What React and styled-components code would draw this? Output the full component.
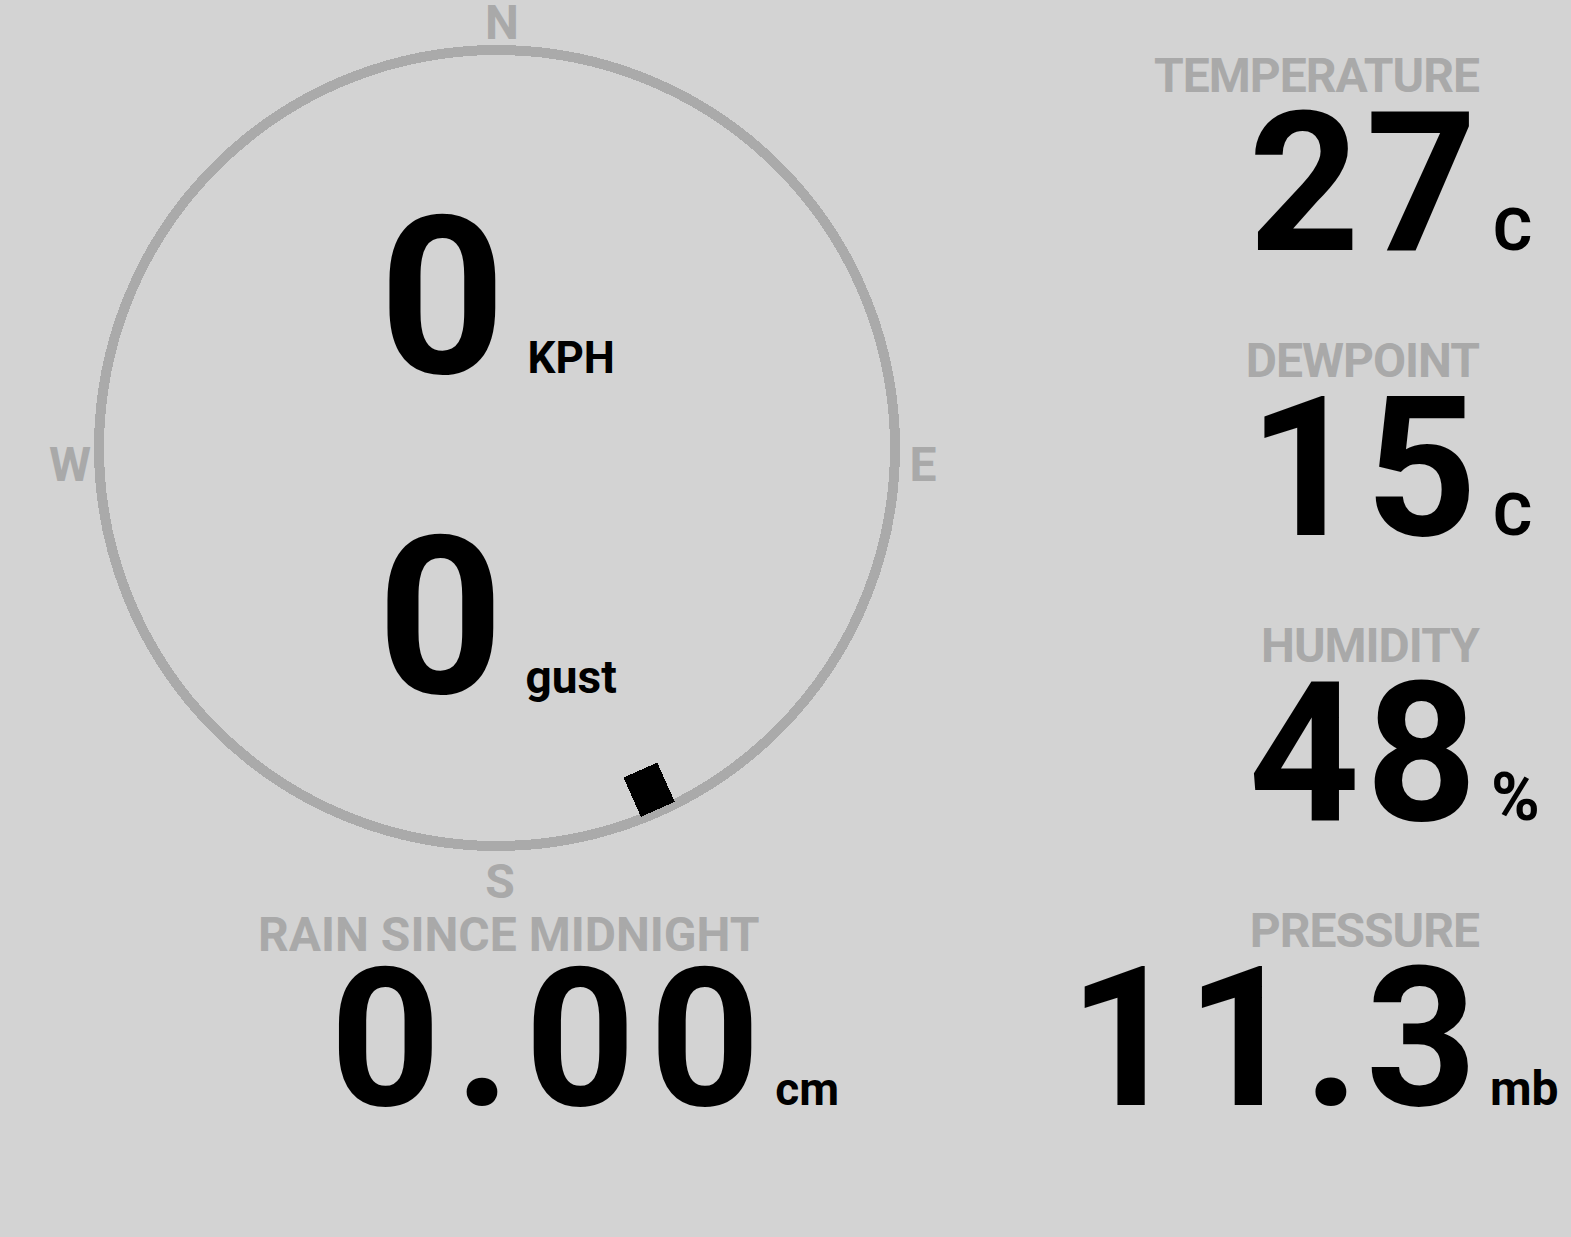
import React from "react";
import styled, { createGlobalStyle } from "styled-components";

const GlobalStyle = createGlobalStyle`
  html, body {
    margin: 0;
    padding: 0;
    background: #d3d3d3;
  }
  body {
    font-family: Roboto, "Liberation Sans", sans-serif;
  }
`;

const Page = styled.main`
  display: flex;
  width: 100%;
  height: 1237px;
  background: #d3d3d3;
  overflow: hidden;
`;

const LeftColumn = styled.section`
  display: flex;
  flex-direction: column;
  width: 994px;
`;

const Dial = styled.div`
  display: grid;
  width: 994px;
  height: 905px;

  > * {
    grid-area: 1 / 1;
  }

  svg {
    overflow: visible;
  }
`;

const Readouts = styled.div`
  display: flex;
  flex-direction: column;
  align-items: center;
  gap: 140px;
  padding-top: 208px;
`;

const Readout = styled.div`
  display: flex;
  align-items: baseline;
`;

const BigNumber = styled.span`
  font-weight: 700;
  font-size: ${(p) => p.size || 194}px;
  line-height: ${(p) => p.lh || 155}px;
  letter-spacing: ${(p) => p.spacing || 0}px;
  color: #000;
`;

const Unit = styled.span`
  font-weight: 700;
  font-size: ${(p) => p.size || 44}px;
  line-height: 1;
  color: #000;
  margin-left: ${(p) => p.gap || 14}px;
`;

const Label = styled.div`
  font-weight: 700;
  font-size: 48px;
  line-height: 48px;
  color: #a9a9a9;
  white-space: nowrap;
`;

const Rain = styled.div`
  display: flex;
  flex-direction: column;
  align-items: flex-start;
  padding-left: 258px;
  gap: 3px;
  margin-top: 6px;
`;

const RainRow = styled.div`
  display: flex;
  align-items: baseline;
  margin-left: 72px;
`;

const RightColumn = styled.section`
  flex: 1;
  display: flex;
  flex-direction: column;
  align-items: flex-end;
  padding-top: 52px;
  gap: 76px;
`;

const Reading = styled.div`
  display: flex;
  flex-direction: column;
  align-items: flex-end;
  gap: 6px;
`;

const ReadingLabel = styled(Label)`
  letter-spacing: -1px;
  margin-right: 92px;
`;

const ValueRow = styled.div`
  display: flex;
  align-items: baseline;
`;

const UnitCell = styled.span`
  width: 88px;
  box-sizing: border-box;
  padding-left: ${(p) => p.pad ?? 10}px;
  font-weight: 700;
  font-size: ${(p) => p.size || 60}px;
  line-height: 1;
  color: #000;
`;

const CompassLetter = styled.text`
  font-family: Roboto, "Liberation Sans", sans-serif;
  font-weight: 700;
  font-size: 48px;
  fill: #a9a9a9;
`;

function Compass({ direction }) {
  const cx = 497;
  const cy = 448;
  const r = 398;
  const markerR = 374;
  const rad = (direction * Math.PI) / 180;
  const mx = cx + markerR * Math.sin(rad);
  const my = cy - markerR * Math.cos(rad);
  return (
    <svg width="994" height="905" viewBox="0 0 994 905">
      <circle
        cx={cx}
        cy={cy}
        r={r}
        fill="none"
        stroke="#aaaaaa"
        strokeWidth="10"
        shapeRendering="crispEdges"
      />
      <CompassLetter x="502" y="39" textAnchor="middle">N</CompassLetter>
      <CompassLetter x="500" y="898" textAnchor="middle">S</CompassLetter>
      <CompassLetter x="70" y="481" textAnchor="middle">W</CompassLetter>
      <CompassLetter x="923" y="481" textAnchor="middle">E</CompassLetter>
      <rect
        x="-18.5"
        y="-21.5"
        width="37"
        height="43"
        fill="#000"
        shapeRendering="crispEdges"
        transform={`translate(${mx} ${my}) rotate(${direction - 180})`}
      />
    </svg>
  );
}

const readings = [
  { label: "TEMPERATURE", value: "27", unit: "C" },
  { label: "DEWPOINT", value: "15", unit: "C" },
  { label: "HUMIDITY", value: "48", unit: "%", unitSize: 66, pad: 8 },
  { label: "PRESSURE", value: "11.3", unit: "mb", unitSize: 48, pad: 7 },
];

export default function App() {
  return (
    <>
      <GlobalStyle />
      <Page>
        <LeftColumn>
          <Dial>
            <Compass direction={156} />
            <Readouts>
              <Readout>
                <BigNumber size={220} lh={180}>0</BigNumber>
                <Unit gap={22}>KPH</Unit>
              </Readout>
              <Readout>
                <BigNumber size={220} lh={180}>0</BigNumber>
                <Unit size={46} gap={22}>gust</Unit>
              </Readout>
            </Readouts>
          </Dial>
          <Rain>
            <Label>RAIN SINCE MIDNIGHT</Label>
            <RainRow>
              <BigNumber size={193} spacing={14}>0.00</BigNumber>
              <Unit size={46} gap={1}>cm</Unit>
            </RainRow>
          </Rain>
        </LeftColumn>
        <RightColumn>
          {readings.map((r) => (
            <Reading key={r.label}>
              <ReadingLabel>{r.label}</ReadingLabel>
              <ValueRow>
                <BigNumber spacing={6}>{r.value}</BigNumber>
                <UnitCell size={r.unitSize} pad={r.pad}>
                  {r.unit}
                </UnitCell>
              </ValueRow>
            </Reading>
          ))}
        </RightColumn>
      </Page>
    </>
  );
}
